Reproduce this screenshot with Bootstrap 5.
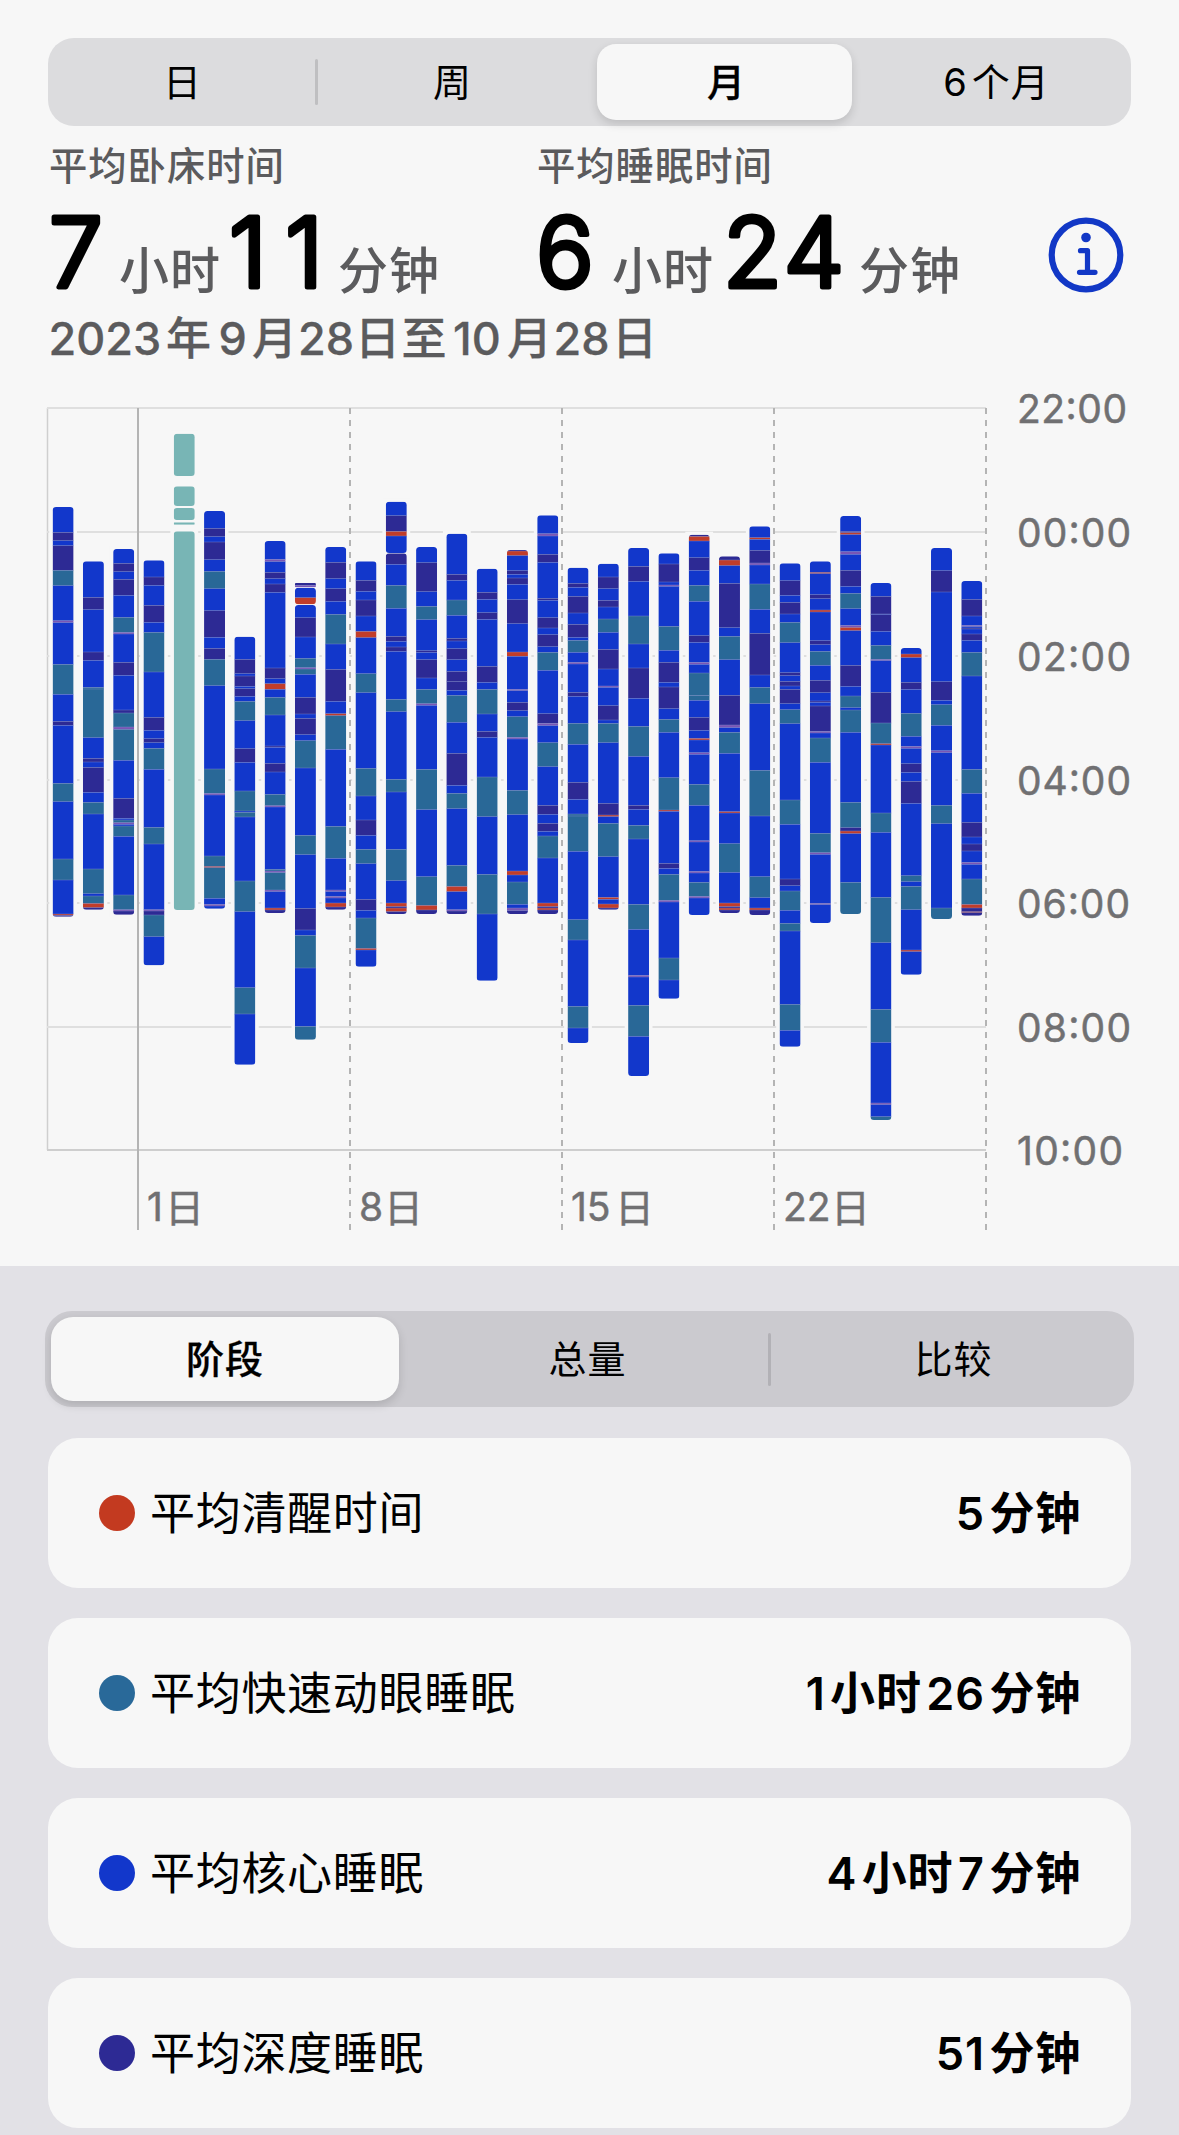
<!DOCTYPE html>
<html lang="zh-CN">
<head>
<meta charset="utf-8">
<meta name="viewport" content="width=device-width, initial-scale=1">
<title>睡眠</title>
<link href="https://cdn.jsdelivr.net/npm/bootstrap@5.3.0/dist/css/bootstrap.min.css" rel="stylesheet">
<style>
body{background:#f7f7f7;color:#000;font-family:Inter,"Noto Sans CJK SC",sans-serif;width:1179px;height:2135px;overflow:hidden}
.seg{position:relative;font-size:38px;line-height:1}
.seg .nav-link{color:#000;padding:0;display:flex;align-items:center;justify-content:center;letter-spacing:1px;line-height:1;height:100%}
.seg .nav-link.active{background:#f7f7f7;color:#000;font-weight:500;-webkit-text-stroke:.3px #000;box-shadow:0 4px 10px rgba(0,0,0,.14)}
.seg-rule{width:3px;flex:none;border-radius:2px}
.seg-top{margin:38px 48px 0;height:88px;background:#dcdcde;border-radius:26px;padding:6px}
.seg-top .nav-link.active{border-radius:19px}
.seg-top .seg-rule{background:#bfbfc1;height:46px}
.summary{height:218px;padding:15px 48px 0}
.metric-label{font-size:38.3px;line-height:50px;letter-spacing:1px;padding-left:1px;color:#5b5b5d;font-weight:500}
.metric-fig{display:block;margin-top:11px;overflow:visible}
.big-num{font-size:96px;font-weight:300;fill:#000;stroke:#000;stroke-width:5;stroke-linejoin:round}
.unit{font-size:50px;font-weight:500;fill:#5b5b5d;letter-spacing:1px}
.period{font-size:45px;font-weight:500;fill:#5b5b5d;stroke:#5b5b5d;stroke-width:.3}
.chart-lab{font-size:39px;fill:#707072;stroke:#707072;stroke-width:.5}
.detail{background:#e2e1e6;height:869px;padding-top:45px}
.seg-low{margin:0 45px;height:96px;background:#cbcacf;border-radius:27px;padding:6px}
.seg-low .nav-link.active{border-radius:22px}
.seg-low .seg-rule{background:#b2b1b6;height:53px}
.stages{margin:31px 48px 0;gap:30px}
.stage{height:150px;background:#f7f7f7;border:0;border-radius:30px;padding:0 50px 0 51px;font-size:45px;line-height:1}
.stage-name{letter-spacing:.7px;margin-left:15px}
.stage-val{font-weight:600;letter-spacing:.8px;word-spacing:-7.5px}
.dot{width:36px;height:36px;border-radius:50%}
</style>
</head>
<body>
<ul class="nav seg seg-top d-flex align-items-center flex-nowrap">
  <li class="h-100" style="width:261px"><a class="nav-link pe-1" href="#">日</a></li>
  <li class="seg-rule"></li>
  <li class="h-100" style="width:269px"><a class="nav-link" href="#">周</a></li>
  <li class="h-100" style="width:9px"></li>
  <li class="h-100" style="width:255px;margin-left:1px"><a class="nav-link active ps-1" href="#">月</a></li>
  <li class="h-100 flex-fill"><a class="nav-link ps-3" href="#"><span class="me-1">6</span>个月</a></li>
</ul>

<section class="summary">
  <div class="d-flex">
    <div style="width:488px">
      <div class="metric-label">平均卧床时间</div>
      <svg class="metric-fig" width="480" height="100">
        <text class="big-num" x="1" y="85">7</text><text class="unit" x="71" y="87">小时</text>
        <text class="big-num" x="181" y="85" textLength="94">11</text><text class="unit" x="290" y="87">分钟</text>
      </svg>
    </div>
    <div class="flex-fill">
      <div class="metric-label">平均睡眠时间</div>
      <svg class="metric-fig" width="480" height="100">
        <text class="big-num" x="0" y="85">6</text><text class="unit" x="76" y="87">小时</text>
        <text class="big-num" x="187" y="85" textLength="121">24</text><text class="unit" x="323" y="87">分钟</text>
      </svg>
    </div>
    <svg class="flex-shrink-0" width="76" height="76" viewBox="0 0 76 76" style="margin:76px 7px 0 0" fill="none" stroke="#1238c6" stroke-linecap="round" stroke-linejoin="round">
      <circle cx="38" cy="38" r="34.3" stroke-width="6.2"/>
      <circle cx="38" cy="20.500" r="4.800" fill="#1238c6" stroke="none"/>
      <path d="M32.500 33.700H39.500V55M31.500 55.300H47" stroke-width="5.200"/>
    </svg>
  </div>
</section>
<svg class="period d-block" width="1179" height="56" style="margin-top:-34px"><text y="45"><tspan x="48.500">2023</tspan><tspan x="166">年</tspan><tspan x="218.500">9</tspan><tspan x="252">月</tspan><tspan x="298">28</tspan><tspan x="355">日</tspan><tspan x="401.500">至</tspan><tspan x="453">10</tspan><tspan x="507">月</tspan><tspan x="553.500">28</tspan><tspan x="612">日</tspan></text></svg>

<svg id="chart" class="d-block" width="1179" height="900" viewBox="0 366 1179 900"></svg>

<section class="detail">
  <ul class="nav seg seg-low d-flex align-items-center flex-nowrap">
    <li class="h-100" style="width:348px"><a class="nav-link active" href="#">阶段</a></li>
    <li class="h-100" style="width:369px"><a class="nav-link ps-2" href="#">总量</a></li>
    <li class="seg-rule"></li>
    <li class="h-100 flex-fill"><a class="nav-link ps-2" href="#">比较</a></li>
  </ul>
  <div class="stages d-flex flex-column">
    <div class="card stage flex-row align-items-center"><span class="dot" style="background:#c33a20"></span><span class="stage-name">平均清醒时间</span><span class="stage-val ms-auto">5 分钟</span></div>
    <div class="card stage flex-row align-items-center"><span class="dot" style="background:#296999"></span><span class="stage-name">平均快速动眼睡眠</span><span class="stage-val ms-auto">1 小时 26 分钟</span></div>
    <div class="card stage flex-row align-items-center"><span class="dot" style="background:#1237cb"></span><span class="stage-name">平均核心睡眠</span><span class="stage-val ms-auto">4 小时 7 分钟</span></div>
    <div class="card stage flex-row align-items-center"><span class="dot" style="background:#2d2a94"></span><span class="stage-name">平均深度睡眠</span><span class="stage-val ms-auto">51 分钟</span></div>
  </div>
</section>

<script>
// One night per entry; "|" separates pieces. Each piece: start, then stage letter + end, in thirds of a pixel.
// B core, D deep, R REM, A awake, L brief wake-up, T time in bed only
const nights = [
"321 B397 D422 B437 D511 R557 B662 L668 B793 R883 B964 D976 B1150 R1205 B1377 R1440 B1542 A1546 D1550",
"484 B592 D629 B756 D781 B862 R867 R1013 B1075 D1086 B1102 D1177 B1207 R1242 B1407 R1481 B1488 R1510 A1523 D1529",
"447 B490 D515 B538 D586 B652 R697 L702 B787 D826 B930 D939 R981 L988 R1081 B1195 D1255 B1260 R1268 L1273 B1278 R1309 B1485 R1529 L1533 D1544",
"481 B531 D556 B616 D667 B697 R816 B952 D991 B1016 D1028 B1045 R1108 B1282 R1332 B1529 L1533 D1545 R1610 B1696",
"101 T228|259 T318|324 T360|367 T374|394 T1530",
"333 B385 D410 B426 D479 B514 R566 B632 D712 B745 D778 R857 B1107 R1180 L1185 B1368 R1399 A1403 R1495 B1513 L1518 B1526",
"710 B778 D821 B828 D859 B866 D889 B904 R962 B1046 D1087 B1173 R1233 B1237 R1251 B1443 R1535 B1763 R1842 B1994",
"423 B478 L485 B517 D536 B552 D577 B804 D836 B851 A868 B892 R945 B1038 D1042 B1090 D1116 B1183 R1217 L1221 B1408 R1413 L1418 R1470 L1475 B1524 A1530 D1539",
"549 D556 L562|563 B593 A613|615 B653 D711 B775 R803 L807 R823 B892 D942 B955 D1004 B1022 R1104 B1306 R1364 B1525 D1590 B1606 R1704 B1879 R1919",
"441 B487 D536 B566 D604 B643 R732 B808 D904 B941 A947 R1048 B1279 R1375 B1470 L1475 B1489 L1494 B1509 A1521 D1529",
"484 B541 D574 B600 D648 B694 A713 B821 R878 B1105 R1188 B1260 D1306 B1348 R1391 B1498 D1531 B1554 R1645 A1650 B1700",
"305 B347 D394 A408 B459|460 D493 B556 R625 B709 D724 B741 D754 B898 R935 B1138 R1176 B1348 R1442 B1509 A1520 D1524 A1535 D1542",
"441 B488 D575 B619 R659 B752 D757 B779 D834 B868 R911 L916 B1108 R1229 B1430 R1516 A1530 D1542",
"401 B523 D541 B600 R646 B715 D723 B746 D779 B814 D845 D871 B886 R967 B1060 D1156 B1180 R1226 B1396 R1459 A1475 B1529 L1533 D1542",
"506 B577 D598 B638 D658 B799 D847 B868 R942 B994 D1012 B1131 R1250 B1423 R1542 B1742",
"450 D453 A467 B512 D523 B534 D553 B599 D671 B756 A769 B868 L872 B907 D932 B950 R1012 L1017 B1171 R1244 B1413 A1425 B1446 R1513 B1524 L1532 D1542",
"346 B401 L408 B463 D487 B595 D601 B653 D684 B704 D740 B757 R811 B941 D970 L977 B1028 R1100 B1216 D1243 B1270 D1294 B1308 R1374 B1509 A1520 D1524 A1530 D1542",
"503 B550 D562 B589 D639 B673 D712 B721 R757 B787 L792 B877 D889 B970 R1033 B1147 D1198 B1242 R1248 R1354 B1559 R1620 B1819 R1884 B1929",
"491 B531 D566 B601 D621 B657 R697 B748 D807 B858 L862 B917 D960 B970 R1028 B1210 D1245 A1250 B1270 R1370 B1492 A1498 B1512 A1524 D1529",
"444 B499 D544 B648 R732 B804 D895 B979 R1069 B1216 D1228 B1276 R1317 B1513 R1588 B1726 L1731 B1816 R1909 B2028",
"460 B492 D546 B555 L559 B679 R751 B787 D847 B861 D926 B958 R997 B1133 R1230 A1234 B1390 D1405 B1423 R1501 L1506 B1674 R1740 B1796",
"404 D409 A423 B473 D511 B556 R604 B707 D727 B787 L793 B819 R886 R901 B952 D991 B1015 A1020 B1058 L1063 B1153 R1216 B1322 L1326 B1414 L1419 B1447 R1489 L1494 B1545",
"469 D480 A497 B550 D683 B709 R779 B886 D975 L983 B997 R1060 B1235 A1239 B1331 R1417 B1509 A1520 D1524 A1530 D1539",
"379 B413 A418 B451 D489 L495 B552 R628 B700 D825 B862 R911 B1111 R1248 B1430 R1493 B1524 A1530 D1545",
"490 B542 D586 B607 D642 B667 R728 B818 D827 B844 D858 B868 D911 B929 R971 B1200 R1273 B1437 D1457 B1473 R1531 B1570 R1593 B1813 R1891 B1940",
"484 B517 A521 B584 D596 B630 A636 B722 D734 B754 R796 B841 D878 B903 D907 B918 D994 L999 B1014 R1087 B1300 R1358 L1363 B1510 L1514 B1569",
"348 B394 D398 A404 B455 L463 B511 D559 B580 R626 B676 L682 A692 B796 D859 B888 R923 B930 R997 B1207 R1283 D1293 A1301 B1447 R1542",
"549 B589 D642 B644 D694 B736 R778 L782 B877 D969 R1031 A1035 B1239 R1297 B1492 R1628 B1828 R1927 B2109 L2114 B2150 R2160",
"744 B762 A773 B847 D868 B940 R1009 B1039 L1045 B1091 D1117 B1144 D1210 B1427 R1445 B1459 R1529 B1650 A1655 B1724",
"444 B512 D576 B845 D901 B914 R976 B1052 L1058 B1216 R1271 B1524 R1557",
"543 B598 D648 B676 L680 B684 D687 B702 D721 B757 R828 B1108 R1180 B1267 D1311 B1332 D1353 B1387 L1393 B1437 R1513 A1524 D1535 A1538 D1547"
];
const fills = {B:'#1237cb',D:'#2d2a94',R:'#296897',A:'#c13d2a',L:'#7956b5',T:'#78b5b5'};
const y = v => 400 + v / 3;
let out = '<path d="M47.500 408V1150" stroke="#cfcfcf" stroke-width="1.500"/>';
[408,532,656,780,903,1027,1150].forEach((v,i) =>
  out += `<path d="M47 ${v}H986" stroke="${i===6?'#cecece':'#dfdfdf'}" stroke-width="2"/>`);
let halos = '', bars = '';
nights.forEach((night,i) => {
  const x = 52.6 + 30.29 * i;
  night.split('|').forEach((piece,k) => {
    const parts = piece.split(' ');
    const top = y(+parts[0]), end = y(+parts[parts.length-1].slice(1));
    const id = `n${i}p${k}`, r = Math.min(3.5,(end-top)/4);
    halos += `<rect x="${x-3.4}" y="${top-3}" width="27.800" height="${end-top+6}" fill="#f7f7f7"/>`;
    bars += `<clipPath id="${id}"><rect x="${x}" y="${top}" width="21" height="${end-top}" rx="${r}"/></clipPath><g clip-path="url(#${id})">`;
    let from = top;
    parts.slice(1).forEach((p,j) => {
      const to = y(+p.slice(1));
      bars += `<rect x="${x}" y="${from}" width="21" height="${to-from+.1}" fill="${fills[p[0]]}"/>`;
      if (j) bars += `<rect x="${x}" y="${from-.35}" width="21" height=".7" fill="#7f8ccb" opacity=".6"/>`;
      from = to;
    });
    bars += '</g>';
  });
});
out += halos + bars;
out += '<path d="M138 408V1230" stroke="#b4b4b4" stroke-width="2"/>';
[350,562,774,986].forEach(v => out += `<path d="M${v} 408V1230" stroke="#b4b4b4" stroke-width="2" stroke-dasharray="6 6"/>`);
[[408,'22:00',110],[532,'00:00',114],[656,'02:00',114],[780,'04:00',114],[903,'06:00',113],[1027,'08:00',114],[1150,'10:00',106]].forEach(t =>
  out += `<text class="chart-lab" x="1017" y="${t[0]+15}" textLength="${t[2]}">${t[1]}</text>`);
[[147,'1',18],[359,'8',25],[571,'15',44],[783,'22',48]].forEach(t =>
  out += `<text class="chart-lab" x="${t[0]}" y="1221">${t[1]}</text><text class="chart-lab" x="${t[0]+t[2]}" y="1222">日</text>`);
document.getElementById('chart').innerHTML = out;
</script>
<script src="https://cdn.jsdelivr.net/npm/bootstrap@5.3.0/dist/js/bootstrap.bundle.min.js"></script>
</body>
</html>
